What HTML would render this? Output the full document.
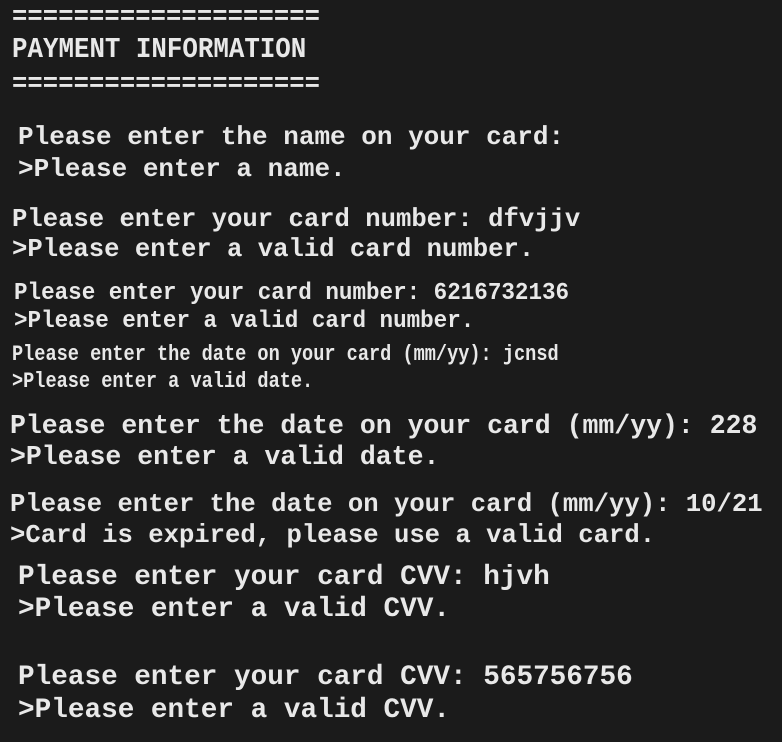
<!DOCTYPE html>
<html><head><style>
body{margin:0;width:782px;height:742px;background:#1b1b1b;overflow:hidden;position:relative}
div{position:absolute;white-space:pre;color:#e8e8e8;font-family:"Liberation Mono",monospace;line-height:1;font-weight:bold;transform-origin:0 0}
</style></head><body>
<div style="left:12px;top:5px;font-size:25.5px;letter-spacing:0.1px">====================</div>
<div style="left:12px;top:35px;font-size:29px;transform:scaleX(0.89)">PAYMENT INFORMATION</div>
<div style="left:12px;top:72px;font-size:25.5px;letter-spacing:0.1px">====================</div>
<div style="left:18px;top:124px;font-size:26px">Please enter the name on your card:</div>
<div style="left:18px;top:156px;font-size:26px">&gt;Please enter a name.</div>
<div style="left:12px;top:207px;font-size:25.6px">Please enter your card number: dfvjjv</div>
<div style="left:12px;top:237px;font-size:25.6px">&gt;Please enter a valid card number.</div>
<div style="left:14px;top:282px;font-size:24px;transform:scaleX(0.94)">Please enter your card number: 6216732136</div>
<div style="left:14px;top:310px;font-size:24px;transform:scaleX(0.94)">&gt;Please enter a valid card number.</div>
<div style="left:12px;top:344px;font-size:22px;transform:scaleX(0.845)">Please enter the date on your card (mm/yy): jcnsd</div>
<div style="left:12px;top:371px;font-size:22px;transform:scaleX(0.845)">&gt;Please enter a valid date.</div>
<div style="left:10px;top:413px;font-size:26.5px">Please enter the date on your card (mm/yy): 228</div>
<div style="left:10px;top:444px;font-size:26.5px">&gt;Please enter a valid date.</div>
<div style="left:10px;top:492px;font-size:25.6px">Please enter the date on your card (mm/yy): 10/21</div>
<div style="left:10px;top:523px;font-size:25.6px">&gt;Card is expired, please use a valid card.</div>
<div style="left:18px;top:564px;font-size:27.7px">Please enter your card CVV: hjvh</div>
<div style="left:18px;top:596px;font-size:27.7px">&gt;Please enter a valid CVV.</div>
<div style="left:18px;top:664px;font-size:27.7px">Please enter your card CVV: 565756756</div>
<div style="left:18px;top:697px;font-size:27.7px">&gt;Please enter a valid CVV.</div>
</body></html>
